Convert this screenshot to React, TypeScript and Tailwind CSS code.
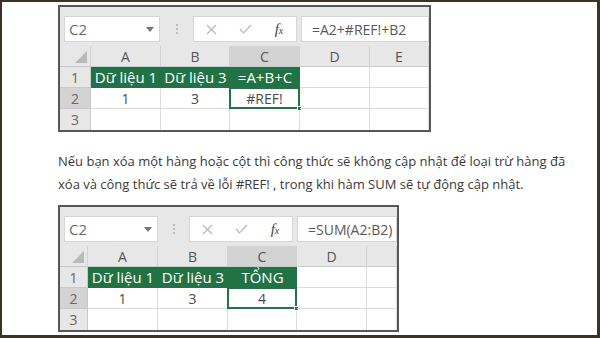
import React from "react";

const FONT = { fontFamily: '"Open Sans", "Noto Sans", sans-serif' };

type Cell = { text?: string; green?: boolean; selected?: boolean; w: string };

type SheetProps = {
  outerW: string;
  nameW: string;
  dotsW: string;
  formula: string;
  rowHeadW: string;
  cols: { label: string; w: string; active?: boolean }[];
  row1: Cell[];
  row2: Cell[];
};

function XIcon() {
  return (
    <svg width="11" height="11" viewBox="0 0 11 11">
      <path d="M1 1 L10 10 M10 1 L1 10" stroke="#b8b8b8" strokeWidth="1.2" fill="none" />
    </svg>
  );
}

function CheckIcon() {
  return (
    <svg width="13" height="10" viewBox="0 0 13 10">
      <path d="M1 5 L4.5 8.8 L12 1" stroke="#b8b8b8" strokeWidth="1.2" fill="none" />
    </svg>
  );
}

function Toolbar({ nameW, dotsW, formula }: { nameW: string; dotsW: string; formula: string }) {
  return (
    <div className="flex h-[48px] items-start bg-[#e7e7e7] pl-[4px] pt-[9px]">
      {/* name box */}
      <div className={`${nameW} flex h-[26px] items-center justify-between border border-[#d6d6d6] bg-white pl-[4px] pr-[5px]`}>
        <span className="text-[15px] text-[#6b6b6b]">C2</span>
        <svg width="8" height="5" viewBox="0 0 8 5">
          <path d="M0 0 L8 0 L4 5 Z" fill="#777" />
        </svg>
      </div>
      <div className={`${dotsW} flex h-[26px] flex-col items-center justify-center gap-[2px]`}>
        <div className="h-[2px] w-[2px] bg-[#bdbdbd]" />
        <div className="h-[2px] w-[2px] bg-[#bdbdbd]" />
        <div className="h-[2px] w-[2px] bg-[#bdbdbd]" />
      </div>
      {/* cancel / enter / fx */}
      <div className="flex h-[26px] w-[104px] items-center border border-[#d6d6d6] bg-white">
        <div className="flex flex-1 justify-center"><XIcon /></div>
        <div className="flex flex-1 justify-center"><CheckIcon /></div>
        <div className="flex flex-1 justify-center">
          <span
            className="text-[15px] italic text-[#444]"
            style={{ fontFamily: '"Liberation Serif", serif' }}
          >
            f<span className="text-[10px]">x</span>
          </span>
        </div>
      </div>
      <div className="ml-[4px] flex h-[26px] flex-1 items-center border border-[#d6d6d6] bg-white pl-[10px]">
        <span className="text-[14px] text-[#595959]">{formula}</span>
      </div>
    </div>
  );
}

function Sheet({ outerW, nameW, dotsW, formula, rowHeadW, cols, row1, row2 }: SheetProps) {
  return (
    <div className={`${outerW} flex h-[127px] flex-col overflow-hidden border-2 border-[#575757] bg-white`}>
      <Toolbar nameW={nameW} dotsW={dotsW} formula={formula} />

      {/* column headers */}
      <div className="flex h-[21px] shrink-0 border-b border-[#c9c9c9] bg-[#e7e7e7]">
        <div className={`${rowHeadW} flex shrink-0 items-end justify-end border-r border-[#d2d2d2] pb-[3px] pr-[3px]`}>
          <svg width="12" height="12" viewBox="0 0 12 12">
            <path d="M12 0 L12 12 L0 12 Z" fill="#b9b9b9" />
          </svg>
        </div>
        {cols.map((c) => (
          <div
            key={c.label}
            className={`${c.w} flex shrink-0 items-center justify-center border-r border-[#d2d2d2] text-[14px] text-[#555] ${
              c.active ? "bg-[#d3d3d3]" : ""
            }`}
          >
            {c.label}
          </div>
        ))}
      </div>

      {/* row 1 */}
      <div className="flex h-[21px] shrink-0">
        <div className={`${rowHeadW} flex shrink-0 items-center justify-center border-b border-r border-[#c9c9c9] bg-[#e7e7e7] text-[14px] text-[#666]`}>
          1
        </div>
        {row1.map((c, i) =>
          c.green ? (
            <div
              key={i}
              className={`${c.w} flex shrink-0 items-center justify-center whitespace-nowrap bg-[#217346] text-[15px] text-white`}
            >
              {c.text}
            </div>
          ) : (
            <div key={i} className={`${c.w} shrink-0 border-b border-r border-[#dcdcdc]`} />
          )
        )}
      </div>

      {/* row 2 */}
      <div className="flex h-[21px] shrink-0">
        <div className={`${rowHeadW} flex shrink-0 items-center justify-center border-b border-r border-[#c9c9c9] bg-[#d3d3d3] text-[14px] text-[#666]`}>
          2
        </div>
        {row2.map((c, i) => (
          <div
            key={i}
            className={`${c.w} relative flex shrink-0 items-center justify-center border-b border-r border-[#dcdcdc] text-[14px] text-[#4a4a4a]`}
          >
            {c.text}
            {c.selected && (
              <>
                <div className="absolute -left-[1px] -top-[1px] bottom-[-1px] right-[-1px] border-2 border-[#217346]" />
                <div className="absolute bottom-[-3px] right-[-3px] h-[5px] w-[5px] border border-white bg-[#217346]" />
              </>
            )}
          </div>
        ))}
      </div>

      {/* row 3 (cut off) */}
      <div className="flex h-[21px] shrink-0">
        <div className={`${rowHeadW} flex shrink-0 items-center justify-center border-r border-[#c9c9c9] bg-[#e7e7e7] text-[14px] text-[#666]`}>
          3
        </div>
        {row2.map((c, i) => (
          <div key={i} className={`${c.w} shrink-0 border-r border-[#dcdcdc]`} />
        ))}
      </div>
    </div>
  );
}

export default function App() {
  return (
    <div
      className="h-[338px] w-[600px] overflow-hidden border-b-[3px] border-l-2 border-r-[3px] border-t-2 border-[#3b3324] bg-white pl-[56px] pt-[3px]"
      style={FONT}
    >
      <Sheet
        outerW="w-[373px]"
        nameW="w-[96px]"
        dotsW="w-[33px]"
        formula="=A2+#REF!+B2"
        rowHeadW="w-[31px]"
        cols={[
          { label: "A", w: "w-[70px]" },
          { label: "B", w: "w-[69px]" },
          { label: "C", w: "w-[70px]", active: true },
          { label: "D", w: "w-[70px]" },
          { label: "E", w: "w-[59px]" },
        ]}
        row1={[
          { text: "Dữ liệu 1", green: true, w: "w-[70px]" },
          { text: "Dữ liệu 3", green: true, w: "w-[69px]" },
          { text: "=A+B+C", green: true, w: "w-[70px]" },
          { w: "w-[70px]" },
          { w: "w-[59px]" },
        ]}
        row2={[
          { text: "1", w: "w-[70px]" },
          { text: "3", w: "w-[69px]" },
          { text: "#REF!", selected: true, w: "w-[70px]" },
          { w: "w-[70px]" },
          { w: "w-[59px]" },
        ]}
      />

      <p className="mt-[18px] w-[520px] text-[13px] leading-[23px] text-[#3a3a3a]">
        Nếu bạn xóa một hàng hoặc cột thì công thức sẽ không cập nhật để loại trừ hàng đã xóa và
        công thức sẽ trả về lỗi #REF! , trong khi hàm SUM sẽ tự động cập nhật.
      </p>

      <div className="mt-[9px]">
        <Sheet
          outerW="w-[341px]"
          nameW="w-[94px]"
          dotsW="w-[31px]"
          formula="=SUM(A2:B2)"
          rowHeadW="w-[28px]"
          cols={[
            { label: "A", w: "w-[70px]" },
            { label: "B", w: "w-[70px]" },
            { label: "C", w: "w-[69px]", active: true },
            { label: "D", w: "w-[70px]" },
            { label: "", w: "w-[30px]" },
          ]}
          row1={[
            { text: "Dữ liệu 1", green: true, w: "w-[70px]" },
            { text: "Dữ liệu 3", green: true, w: "w-[70px]" },
            { text: "TỔNG", green: true, w: "w-[69px]" },
            { w: "w-[70px]" },
            { w: "w-[30px]" },
          ]}
          row2={[
            { text: "1", w: "w-[70px]" },
            { text: "3", w: "w-[70px]" },
            { text: "4", selected: true, w: "w-[69px]" },
            { w: "w-[70px]" },
            { w: "w-[30px]" },
          ]}
        />
      </div>
    </div>
  );
}
